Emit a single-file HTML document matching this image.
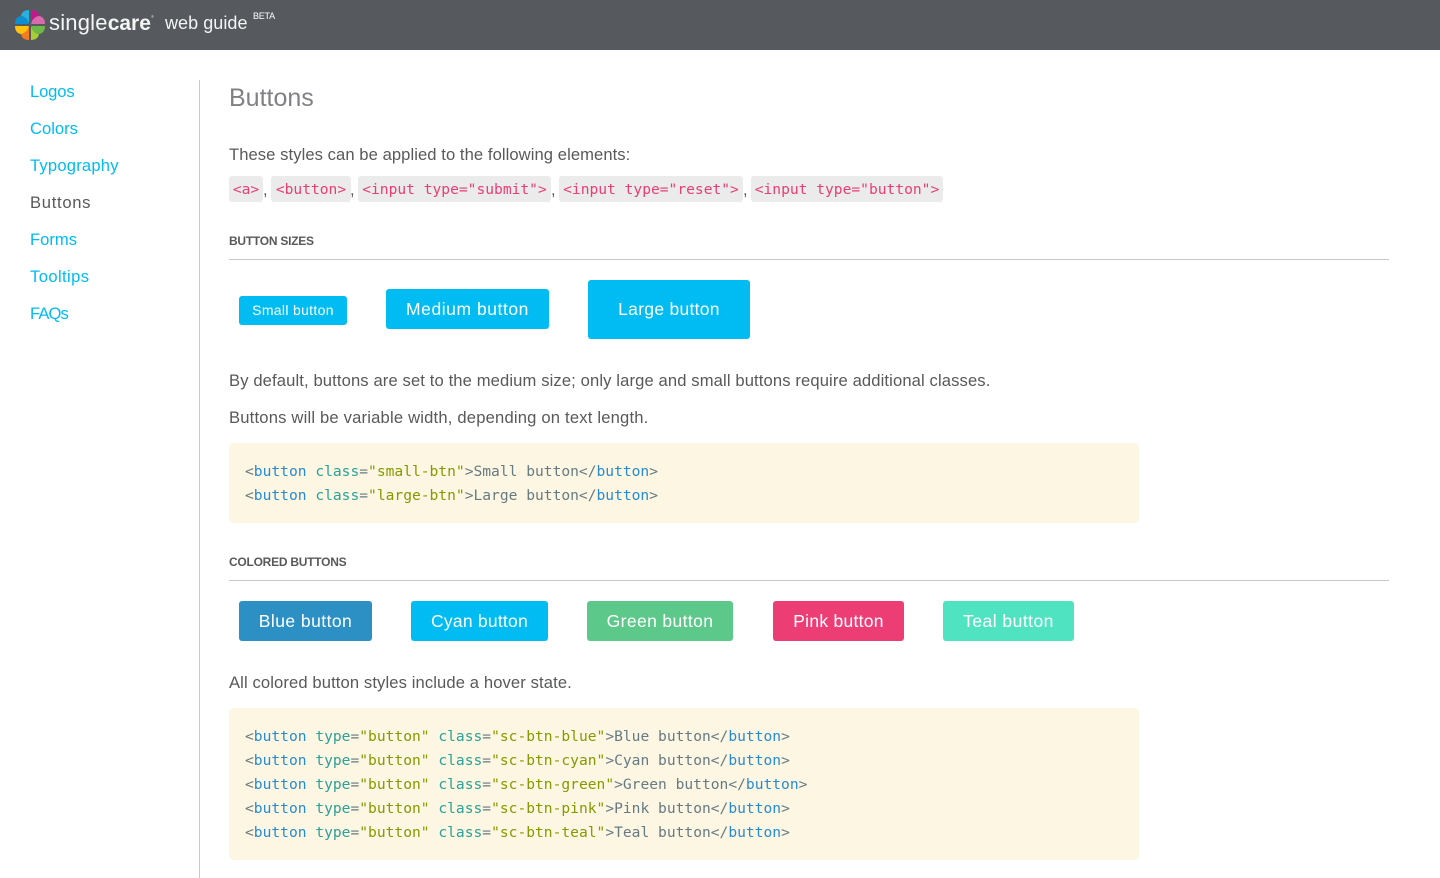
<!DOCTYPE html>
<html lang="en">
<head>
<meta charset="utf-8">
<title>Buttons - singlecare web guide</title>
<style>
html,body{margin:0;padding:0;background:#fff}
body{position:relative;width:1440px;height:878px;overflow:hidden;font-family:"Liberation Sans",sans-serif;color:#58595b}
.a{position:absolute;white-space:nowrap}
header{position:absolute;left:0;top:0;width:1440px;height:50px;background:#565a5e}
.nav{left:30px;font-size:16.6px;line-height:22px;color:#00bcf2}
.p{left:229px;font-size:16.6px;line-height:22px;color:#58595b}
.h{left:229px;font-size:12px;line-height:16px;font-weight:bold;color:#58595b;letter-spacing:-.25px}
.hr{left:229px;width:1160px;height:1px;background:#c8c8c8}
.b{border-radius:3px;color:#fff;text-align:center;font-size:17.5px}
.c{top:176px;height:26px;line-height:28px;background:#ebebeb;border-radius:3px;font-family:"DejaVu Sans Mono",monospace;font-size:14.6px;color:#e83e75;text-align:center}
.box{left:229px;width:910px;background:#fdf6e3;border-radius:5px}
pre{position:absolute;left:245px;margin:0;font-family:"DejaVu Sans Mono",monospace;font-size:14.6px;line-height:24px;color:#657b83}
.t{color:#268bd2}.k{color:#2aa198}.s{color:#859900}
</style>
</head>
<body>
<header>
<svg class="a" style="left:14px;top:9px" width="32" height="32" viewBox="0 0 32 32">
<path fill="#29b0e0" d="M15 1C10 1 7.500 3.500 7 7C11 7.500 14 10.500 15 15Z"/>
<path fill="#0d8ecf" d="M1 15C1 10.500 3 7.500 7 7C11 7.500 14 10.500 15 15Z"/>
<g transform="translate(32 0) scale(-1 1)">
<path fill="#c1188f" d="M15 1C10 1 7.500 3.500 7 7C11 7.500 14 10.500 15 15Z"/>
<path fill="#d96aae" d="M1 15C1 10.500 3 7.500 7 7C11 7.500 14 10.500 15 15Z"/>
</g>
<g transform="translate(0 32) scale(1 -1)">
<path fill="#f47b20" d="M15 1C10 1 7.500 3.500 7 7C11 7.500 14 10.500 15 15Z"/>
<path fill="#ffc20e" d="M1 15C1 10.500 3 7.500 7 7C11 7.500 14 10.500 15 15Z"/>
</g>
<g transform="translate(32 32) scale(-1 -1)">
<path fill="#a6ce39" d="M15 1C10 1 7.500 3.500 7 7C11 7.500 14 10.500 15 15Z"/>
<path fill="#6fb843" d="M1 15C1 10.500 3 7.500 7 7C11 7.500 14 10.500 15 15Z"/>
</g>
<path fill="#565a5e" d="M16 12L17.300 14.700L20 16L17.300 17.300L16 20L14.700 17.300L12 16L14.700 14.700Z"/>
</svg>
<div class="a" style="left:49px;top:9px;font-size:22px;line-height:28px;color:#f4f4f4;letter-spacing:.2px">single<b style="font-size:21px;letter-spacing:0">care</b></div>
<div class="a" style="left:151px;top:14px;font-size:4px;line-height:6px;color:#ddd">®</div>
<div class="a" style="left:165px;top:10px;font-size:18px;line-height:26px;color:#f4f4f4;letter-spacing:.05px">web guide</div>
<div class="a" style="left:253px;top:10px;font-size:9px;line-height:12px;color:#fff;letter-spacing:-.25px">BETA</div>
</header>

<div class="a nav" style="top:81px;letter-spacing:-.15px">Logos</div>
<div class="a nav" style="top:118px">Colors</div>
<div class="a nav" style="top:155px;letter-spacing:.2px">Typography</div>
<div class="a nav" style="top:192px;color:#58595b;letter-spacing:.7px">Buttons</div>
<div class="a nav" style="top:229px">Forms</div>
<div class="a nav" style="top:266px;letter-spacing:.4px">Tooltips</div>
<div class="a nav" style="top:303px;letter-spacing:-.9px">FAQs</div>
<div class="a" style="left:199px;top:80px;width:1px;height:798px;background:#c8c8c8"></div>

<div class="a" style="left:229px;top:81px;font-size:25px;line-height:34px;color:#808184">Buttons</div>
<div class="a p" style="top:144px;letter-spacing:.07px">These styles can be applied to the following elements:</div>

<div class="a c" style="left:229px;width:34px">&lt;a&gt;</div>
<div class="a p" style="left:263px;top:179px">,</div>
<div class="a c" style="left:271px;width:80px">&lt;button&gt;</div>
<div class="a p" style="left:350px;top:179px">,</div>
<div class="a c" style="left:358px;width:193px">&lt;input type="submit"&gt;</div>
<div class="a p" style="left:551px;top:179px">,</div>
<div class="a c" style="left:559px;width:184px">&lt;input type="reset"&gt;</div>
<div class="a p" style="left:743px;top:179px">,</div>
<div class="a c" style="left:751px;width:192px">&lt;input type="button"&gt;</div>

<div class="a h" style="top:233px">BUTTON SIZES</div>
<div class="a hr" style="top:259px"></div>

<div class="a b" style="left:239px;top:296px;width:108px;height:29px;line-height:29px;background:#00bcf2;font-size:14px;letter-spacing:.32px">Small button</div>
<div class="a b" style="left:386px;top:289px;width:163px;height:40px;line-height:41px;background:#00bcf2;letter-spacing:.55px">Medium button</div>
<div class="a b" style="left:588px;top:280px;width:162px;height:59px;line-height:59px;background:#00bcf2;letter-spacing:.28px">Large button</div>

<div class="a p" style="top:370px;letter-spacing:.12px">By default, buttons are set to the medium size; only large and small buttons require additional classes.</div>
<div class="a p" style="top:407px;letter-spacing:.19px">Buttons will be variable width, depending on text length.</div>

<div class="a box" style="top:443px;height:80px"></div>
<pre style="top:460px">&lt;<span class="t">button</span> <span class="k">class</span>=<span class="s">"small-btn"</span>&gt;Small button&lt;/<span class="t">button</span>&gt;
&lt;<span class="t">button</span> <span class="k">class</span>=<span class="s">"large-btn"</span>&gt;Large button&lt;/<span class="t">button</span>&gt;</pre>

<div class="a h" style="top:554px">COLORED BUTTONS</div>
<div class="a hr" style="top:580px"></div>

<div class="a b" style="left:239px;top:601px;width:133px;height:40px;line-height:41px;background:#2c90c4;letter-spacing:.45px">Blue button</div>
<div class="a b" style="left:411px;top:601px;width:137px;height:40px;line-height:41px;background:#00bcf2;letter-spacing:.23px">Cyan button</div>
<div class="a b" style="left:587px;top:601px;width:146px;height:40px;line-height:41px;background:#5cc88a;letter-spacing:.38px">Green button</div>
<div class="a b" style="left:773px;top:601px;width:131px;height:40px;line-height:41px;background:#ec3e75;letter-spacing:.27px">Pink button</div>
<div class="a b" style="left:943px;top:601px;width:131px;height:40px;line-height:41px;background:#50e3c2;letter-spacing:.47px">Teal button</div>

<div class="a p" style="top:672px;letter-spacing:.11px">All colored button styles include a hover state.</div>

<div class="a box" style="top:708px;height:152px"></div>
<pre style="top:725px">&lt;<span class="t">button</span> <span class="k">type</span>=<span class="s">"button"</span> <span class="k">class</span>=<span class="s">"sc-btn-blue"</span>&gt;Blue button&lt;/<span class="t">button</span>&gt;
&lt;<span class="t">button</span> <span class="k">type</span>=<span class="s">"button"</span> <span class="k">class</span>=<span class="s">"sc-btn-cyan"</span>&gt;Cyan button&lt;/<span class="t">button</span>&gt;
&lt;<span class="t">button</span> <span class="k">type</span>=<span class="s">"button"</span> <span class="k">class</span>=<span class="s">"sc-btn-green"</span>&gt;Green button&lt;/<span class="t">button</span>&gt;
&lt;<span class="t">button</span> <span class="k">type</span>=<span class="s">"button"</span> <span class="k">class</span>=<span class="s">"sc-btn-pink"</span>&gt;Pink button&lt;/<span class="t">button</span>&gt;
&lt;<span class="t">button</span> <span class="k">type</span>=<span class="s">"button"</span> <span class="k">class</span>=<span class="s">"sc-btn-teal"</span>&gt;Teal button&lt;/<span class="t">button</span>&gt;</pre>
</body>
</html>
